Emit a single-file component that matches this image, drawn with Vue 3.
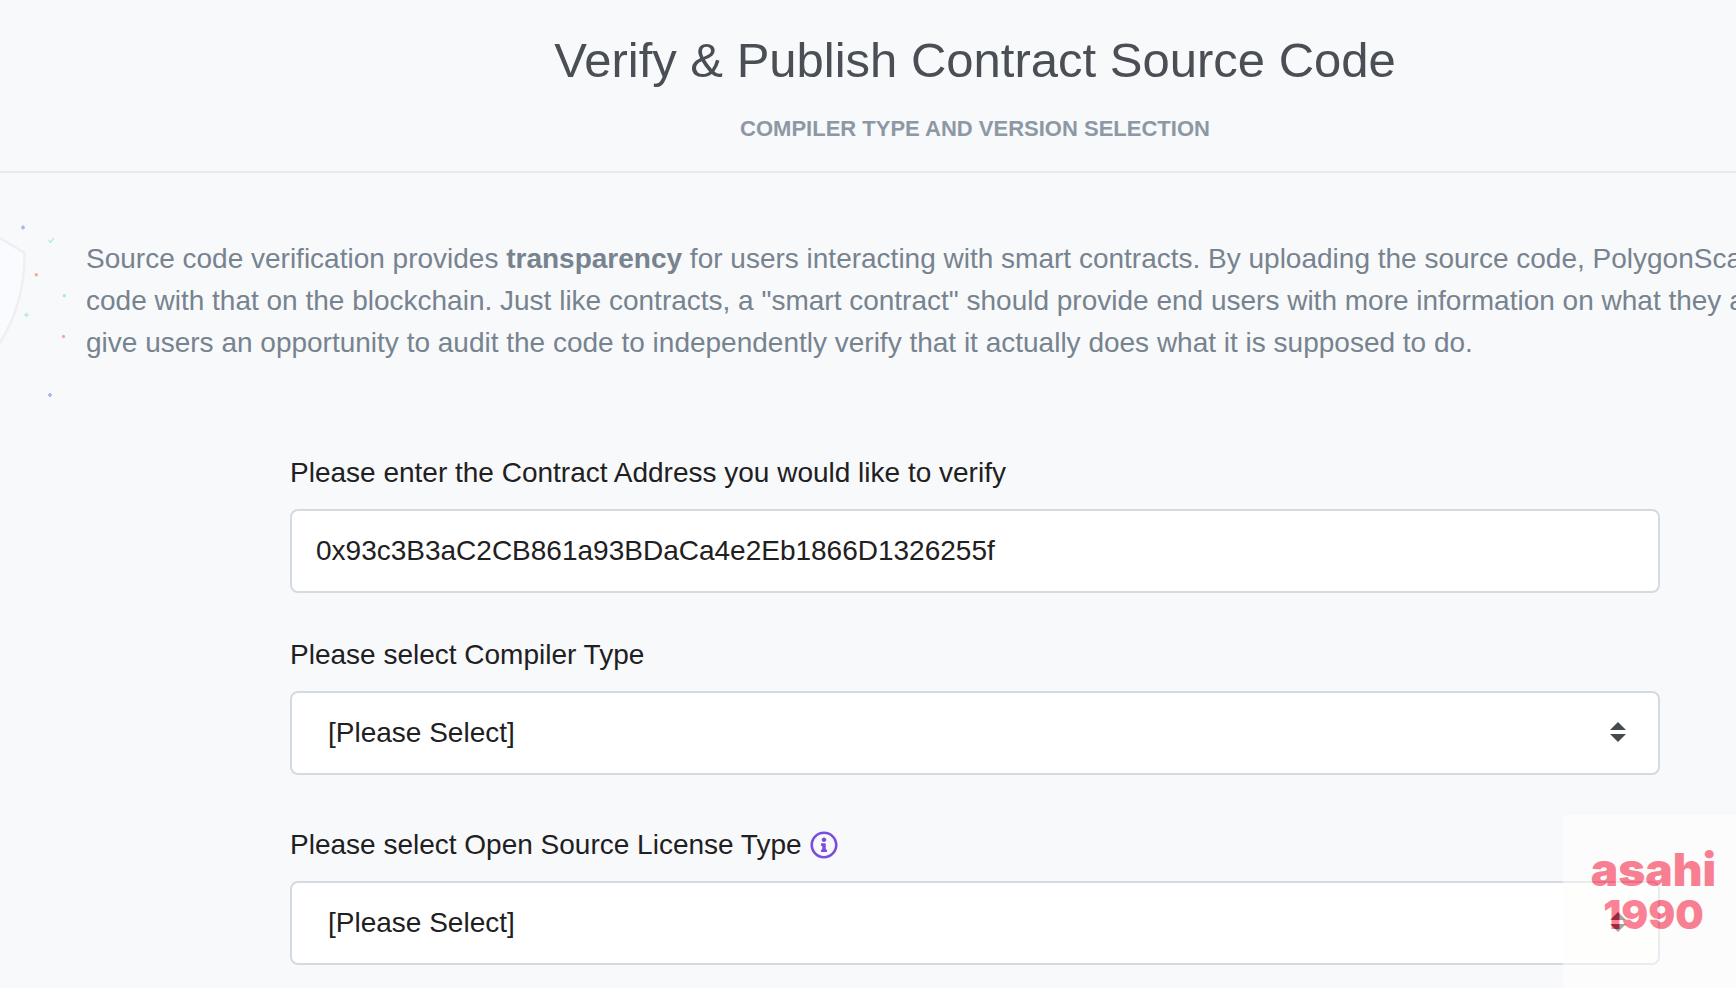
<script setup>
import { ref } from 'vue'

const address = ref('0x93c3B3aC2CB861a93BDaCa4e2Eb1866D1326255f')
const compiler = ref('')
const license = ref('')
</script>

<template>
  <div class="viewport">
    <main class="page">
      <header class="header">
        <h1>Verify &amp; Publish Contract Source Code</h1>
        <p class="subtitle">COMPILER TYPE AND VERSION SELECTION</p>
      </header>

      <section class="intro">
        <svg class="shield" width="80" height="190" viewBox="0 0 80 190" aria-hidden="true">
          <path d="M-30 4L0 22 24.500 37C25 72 15 104 -1 128L-30 156Z" fill="#fafbfe" stroke="#eeeff1" stroke-width="2.400" />
          <g stroke="#a9bcf0" stroke-width="2">
            <path d="M21 11.500h4M23 9.500v4M48 179h4M50 177v4" />
          </g>
          <path d="M48.500 24l2 2.500 3.500-4.500" fill="none" stroke="#b5efd5" stroke-width="1.300" />
          <path d="M24 99h5M26.500 96.500v5" stroke="#b5efd5" stroke-width="1.300" />
          <circle cx="64.300" cy="79.700" r="1.700" fill="#abe9d2" />
          <circle cx="36.300" cy="58.800" r="1.700" fill="#f7a7a0" />
          <circle cx="63.500" cy="120.500" r="1.700" fill="#f7a7a0" />
        </svg>
        <p class="intro-text">
          Source code verification provides <b>transparency</b> for users interacting with smart contracts. By uploading the source code, PolygonScan<br />
          code with that on the blockchain. Just like contracts, a "smart contract" should provide end users with more information on what they are<br />
          give users an opportunity to audit the code to independently verify that it actually does what it is supposed to do.
        </p>
      </section>

      <form class="form" @submit.prevent>
        <div class="field">
          <label for="address">Please enter the Contract Address you would like to verify</label>
          <input id="address" v-model="address" class="control" type="text" spellcheck="false" />
        </div>

        <div class="field">
          <label for="compiler">Please select Compiler Type</label>
          <div class="select-wrap">
            <select id="compiler" v-model="compiler" class="control">
              <option value="">[Please Select]</option>
            </select>
            <svg class="arrows" width="16" height="20" viewBox="0 0 16 20" aria-hidden="true">
              <path d="M8 0L16 8H0ZM0 12H16L8 20Z" fill="#444a50" />
            </svg>
          </div>
        </div>

        <div class="field">
          <div class="label-row">
            <label for="license">Please select Open Source License Type</label>
            <svg width="28" height="28" viewBox="0 0 512 512" aria-hidden="true">
              <path fill="#7a4de0" d="M256 8C119.043 8 8 119.083 8 256c0 136.997 111.043 248 248 248s248-111.003 248-248C504 119.083 392.957 8 256 8zm0 448c-110.532 0-200-89.431-200-200 0-110.495 89.472-200 200-200 110.491 0 200 89.471 200 200 0 110.530-89.431 200-200 200zm0-338c23.196 0 42 18.804 42 42s-18.804 42-42 42-42-18.804-42-42 18.804-42 42-42zm56 254c0 6.627-5.373 12-12 12h-88c-6.627 0-12-5.373-12-12v-24c0-6.627 5.373-12 12-12h12v-64h-12c-6.627 0-12-5.373-12-12v-24c0-6.627 5.373-12 12-12h64c6.627 0 12 5.373 12 12v100h12c6.627 0 12 5.373 12 12v24z" />
            </svg>
          </div>
          <div class="select-wrap">
            <select id="license" v-model="license" class="control">
              <option value="">[Please Select]</option>
            </select>
            <svg class="arrows" width="16" height="20" viewBox="0 0 16 20" aria-hidden="true">
              <path d="M8 0L16 8H0ZM0 12H16L8 20Z" fill="#444a50" />
            </svg>
          </div>
        </div>
      </form>
    </main>

    <div class="watermark">
      <span class="mark-name">asahi</span>
      <span class="mark-year">1990</span>
    </div>
  </div>
</template>

<style>
body {
  background: #f8f9fb;
}
</style>

<style scoped>
.viewport {
  position: relative;
  min-height: 100vh;
  overflow: hidden;
  background: #f8f9fb;
  color: #1e2022;
  font-family: "Liberation Sans", Arial, sans-serif;
  font-size: 28px;
  line-height: 42px;
}

.page {
  width: calc(100% + 214px);
}

.header {
  padding: 30px 0 26px;
  border-bottom: 2px solid #e7eaf3;
  text-align: center;
}

h1 {
  margin: 0;
  font-size: 49px;
  font-weight: 400;
  line-height: 60px;
  color: #4a4f55;
}

.subtitle {
  margin: 22px 0 0;
  font-size: 22px;
  font-weight: 700;
  line-height: 33px;
  color: #8c98a4;
}

.intro {
  position: relative;
  padding: 65px 86px 0;
  color: #77838f;
}

.intro-text {
  margin: 0;
  white-space: nowrap;
}

.shield {
  position: absolute;
  left: 0;
  top: 43px;
}

.form {
  display: flex;
  flex-direction: column;
  gap: 41px;
  margin: 88px 290px 0;
}

.field {
  display: flex;
  flex-direction: column;
  gap: 15px;
}

.label-row {
  display: flex;
  align-items: center;
  gap: 8px;
  padding-top: 8px;
}

.control {
  display: block;
  box-sizing: border-box;
  width: 100%;
  height: 84px;
  margin: 0;
  padding: 0 24px;
  border: 2px solid #d5dae2;
  border-radius: 8px;
  background: #fff;
  color: #1e2022;
  font: inherit;
  appearance: none;
  outline: none;
}

select.control {
  padding: 0 80px 0 36px;
}

.select-wrap {
  position: relative;
}

.arrows {
  position: absolute;
  right: 34px;
  top: 31px;
  pointer-events: none;
}

.watermark {
  position: absolute;
  right: 0;
  bottom: 0;
  display: flex;
  flex-direction: column;
  align-items: center;
  box-sizing: border-box;
  width: 173px;
  height: 173px;
  padding: 29px 0 0 8px;
  background: #fefffc;
  color: #f9052c;
  font-family: Inter, sans-serif;
  font-weight: 900;
  opacity: 0.5;
  pointer-events: none;
}

.mark-name {
  font-size: 46px;
  line-height: 50px;
}

.mark-year {
  font-size: 40px;
  line-height: 42px;
}
</style>
